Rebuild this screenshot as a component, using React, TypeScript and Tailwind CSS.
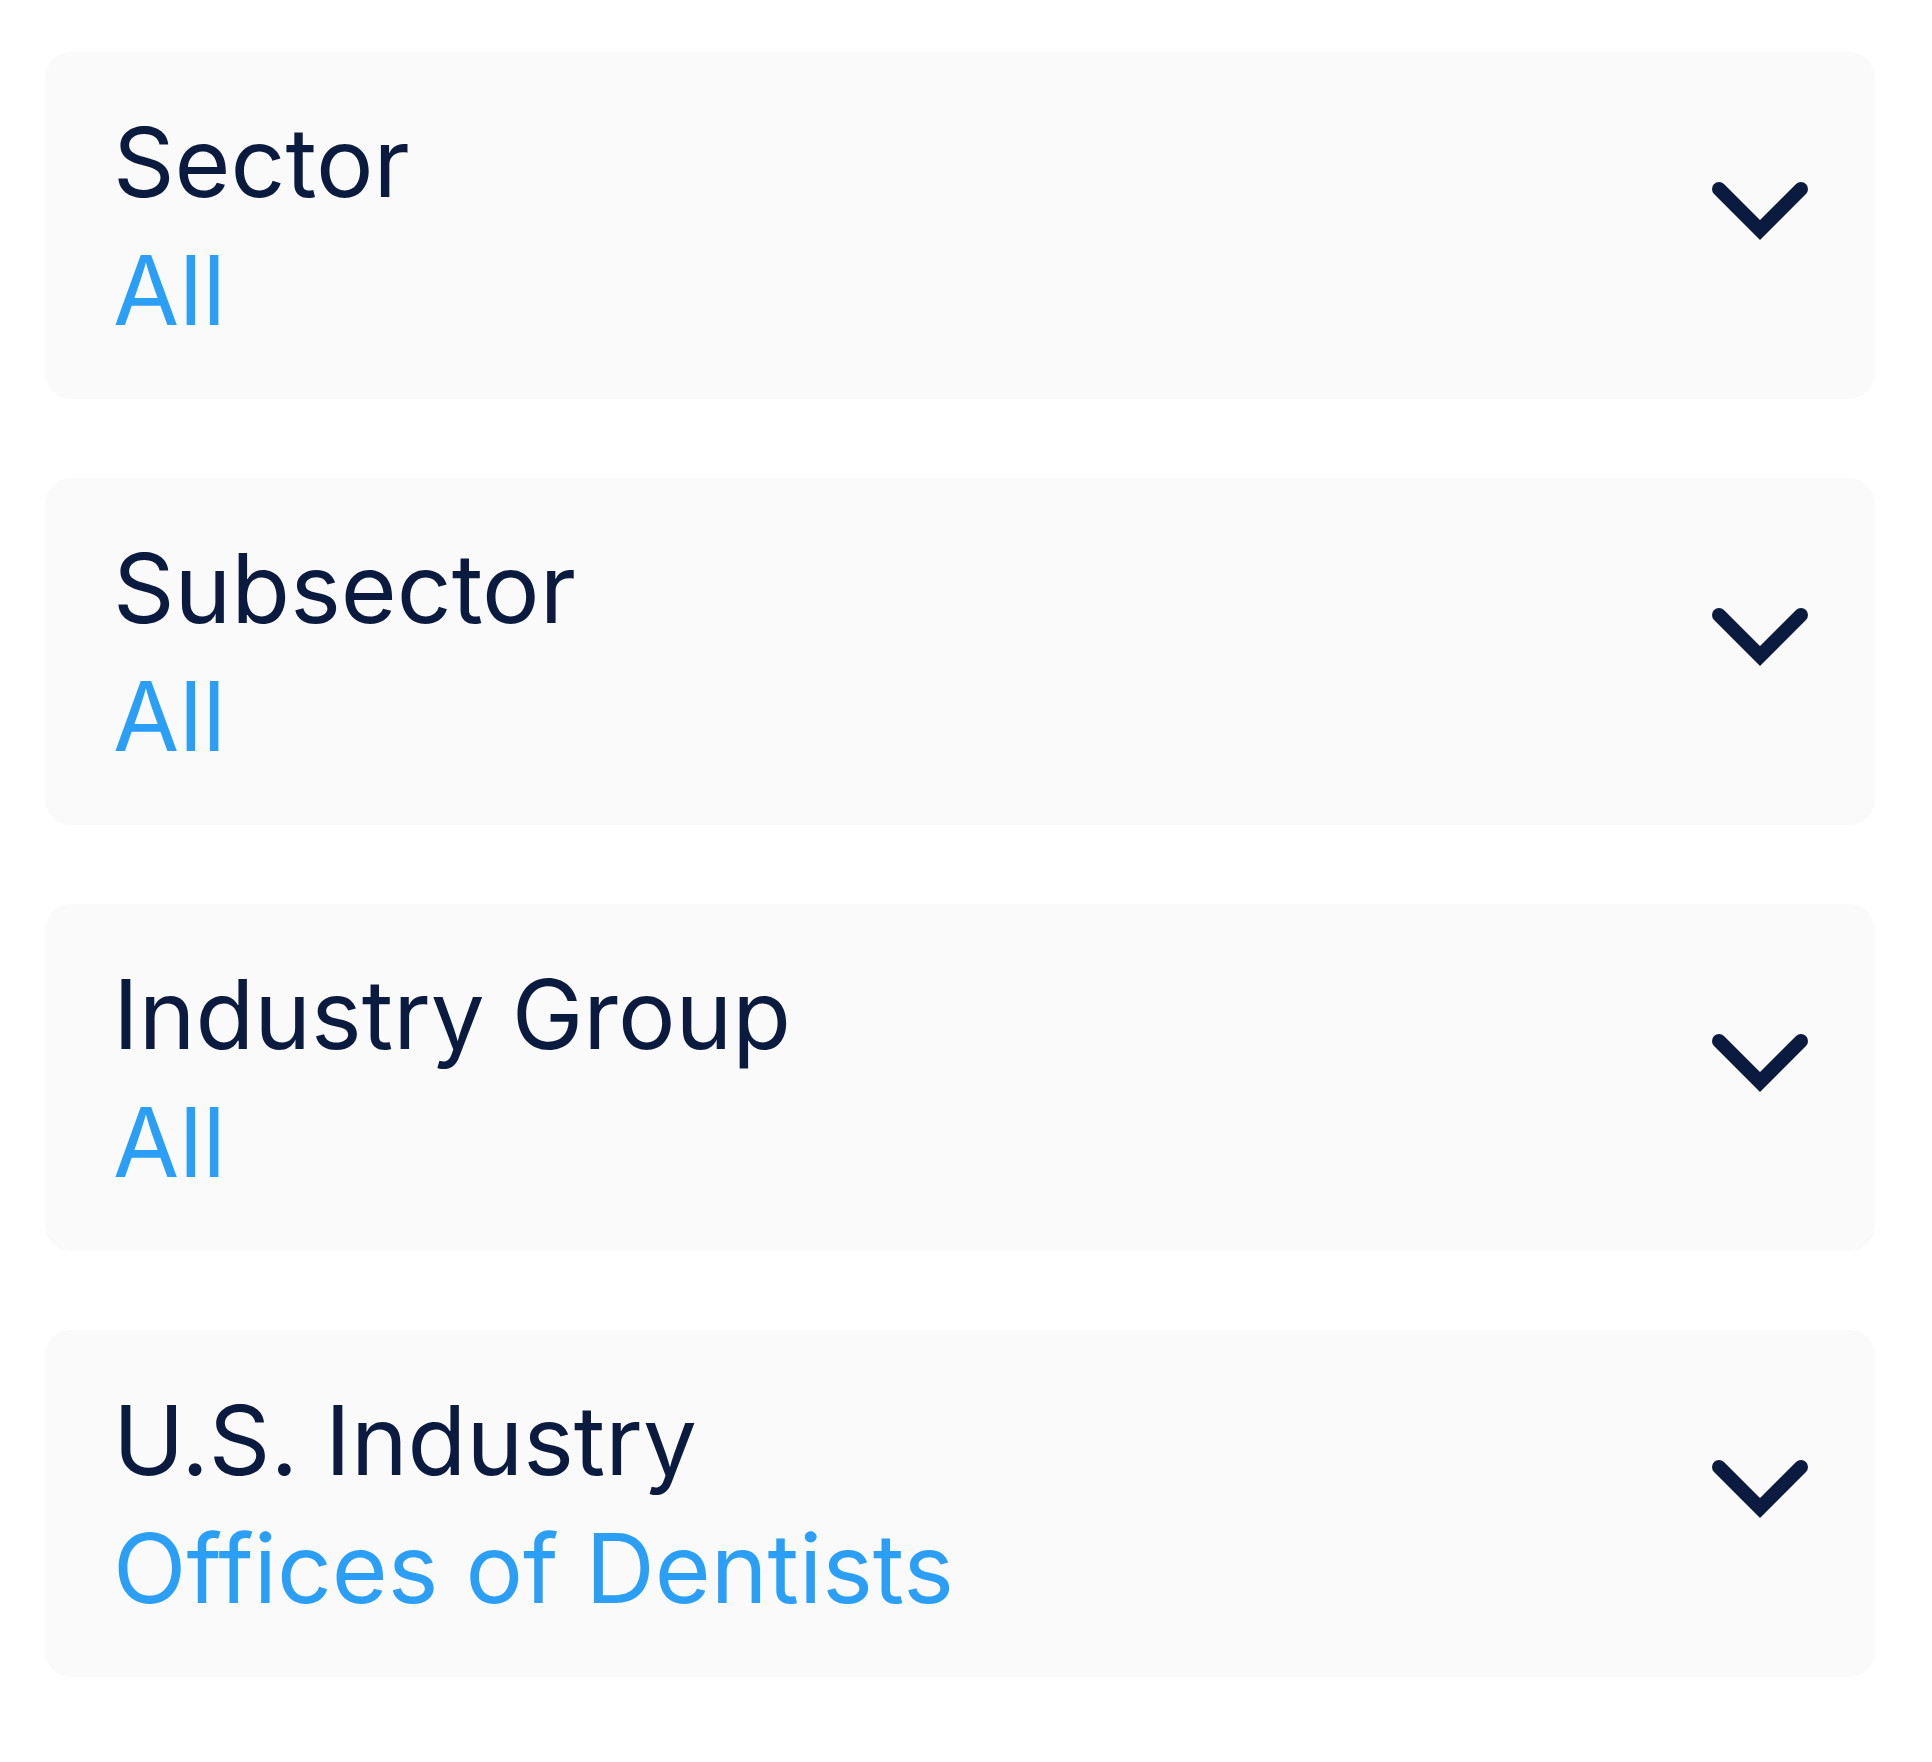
import React from 'react';

interface FilterRowProps {
    label: string;
    value: string;
}

const ChevronDown: React.FC = () => (
    <svg width="96" height="58" viewBox="0 0 96 58" fill="none" className="mb-[29px] shrink-0">
        <polyline
            points="7,7 48,48 89,7"
            stroke="#0b1b3f"
            strokeWidth={14}
            strokeLinecap="round"
            strokeLinejoin="miter"
        />
    </svg>
);

const FilterRow: React.FC<FilterRowProps> = ({ label, value }) => (
    <div className="h-[347px] rounded-[26px] bg-[#fafafa] pl-[68px] pr-[67px] flex items-center justify-between">
        <div className="flex flex-col text-[96px] leading-[128px]">
            <span className="text-[#0b1b3f]">{label}</span>
            <span className="text-[#2b9ef5]">{value}</span>
        </div>
        <ChevronDown />
    </div>
);

export default function App() {
    const filters: FilterRowProps[] = [
        { label: 'Sector', value: 'All' },
        { label: 'Subsector', value: 'All' },
        { label: 'Industry Group', value: 'All' },
        { label: 'U.S. Industry', value: 'Offices of Dentists' },
    ];

    return (
        <div className="min-h-screen bg-white pt-[52px] pl-[45px] pr-[57px] font-['Inter','Noto_Sans',sans-serif]">
            <div className="flex flex-col gap-[79px]">
                {filters.map((f) => (
                    <FilterRow key={f.label} label={f.label} value={f.value} />
                ))}
            </div>
        </div>
    );
}
